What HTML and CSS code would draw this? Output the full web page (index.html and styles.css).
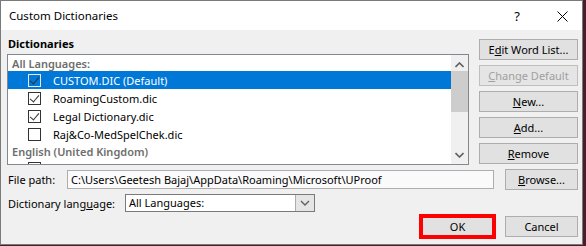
FILE: index.html
```html
<!DOCTYPE html>
<html lang="en">
  <head>
    <meta charset="UTF-8" />
    <title>Custom Dictionaries</title>
    <link rel="stylesheet" href="styles.css">
  </head>
  <body>
    <div class="window">
      <div class="titlebar">
        <span class="title">Custom Dictionaries</span>
        <span class="help">?</span>
        <span class="close">
          <svg width="11" height="11" viewBox="0 0 11 11">
            <path d="M0.5 0.5 L10.5 10.5 M10.5 0.5 L0.5 10.5" stroke="#000" stroke-width="1" fill="none" />
          </svg>
        </span>
      </div>

      <div class="content">
        <div class="top">
          <div class="left">
            <div class="group-label">Dictionaries</div>
            <div class="listbox">
              <div class="items">
                <div class="list-header">All Languages:</div>
                <div class="item selected">
                  <span class="check checked"></span>CUSTOM.DIC (Default)
                </div>
                <div class="item">
                  <span class="check checked"></span>RoamingCustom.dic
                </div>
                <div class="item">
                  <span class="check checked"></span>Legal Dictionary.dic
                </div>
                <div class="item">
                  <span class="check"></span>Raj&amp;Co-MedSpelChek.dic
                </div>
                <div class="list-header">English (United Kingdom)</div>
                <div class="item">
                  <span class="check"></span>ukEnglish-Publish.dic
                </div>
              </div>
              <div class="scrollbar">
                <svg class="arrow" width="9" height="6" viewBox="0 0 9 6">
                  <path d="M0.5 5 L4.5 1 L8.5 5" stroke="#606060" stroke-width="1.6" fill="none" />
                </svg>
                <div class="thumb-track"><div class="thumb"></div></div>
                <svg class="arrow" width="9" height="6" viewBox="0 0 9 6">
                  <path d="M0.5 1 L4.5 5 L8.5 1" stroke="#606060" stroke-width="1.6" fill="none" />
                </svg>
              </div>
            </div>
          </div>

          <div class="buttons">
            <button class="btn">E<u>d</u>it Word List...</button>
            <button class="btn" disabled><u>C</u>hange Default</button>
            <button class="btn"><u>N</u>ew...</button>
            <button class="btn"><u>A</u>dd...</button>
            <button class="btn"><u>R</u>emove</button>
          </div>
        </div>

        <div class="field-row">
          <span class="field-label path-label">File path:</span>
          <div class="path-box">C:\Users\Geetesh Bajaj\AppData\Roaming\Microsoft\UProof</div>
          <button class="btn small"><u>B</u>rowse...</button>
        </div>

        <div class="field-row lang-row">
          <span class="field-label lang-label">Dictionary lang<u>u</u>age:</span>
          <div class="combo">
            <span class="combo-value">All Languages:</span>
            <span class="combo-drop">
              <svg width="10" height="6" viewBox="0 0 10 6">
                <path d="M1 1 L5 5 L9 1" stroke="#606060" stroke-width="1.4" fill="none" />
              </svg>
            </span>
          </div>
        </div>

        <div class="actions">
          <button class="btn small ok">OK</button>
          <button class="btn small">Cancel</button>
        </div>
      </div>
    </div>
  </body>
</html>
```

FILE: styles.css
```css
body {
  margin: 0;
  background-color: #4b1d2a;
  font-family: "Noto Sans", "Open Sans", sans-serif;
  font-size: 11px;
  color: #000;
}

.window {
  box-sizing: border-box;
  width: 583px;
  height: 245px;
  border: 1px solid #7a7a7a;
  background-color: #f0f0f0;
  display: flex;
  flex-direction: column;
}

/* Title bar */
.titlebar {
  height: 29px;
  background-color: #fff;
  display: flex;
  align-items: center;
  padding-left: 8px;
  font-size: 11.5px;
}

.title {
  flex: 1;
}

.help {
  font-size: 13px;
  margin-right: 37px;
}

.close {
  display: flex;
  margin-right: 14px;
  margin-top: 2px;
}

/* Content */
.content {
  flex: 1;
  padding: 6px 4px 0 6px;
}

.top {
  display: flex;
  gap: 10px;
}

.left {
  width: 462px;
}

.group-label {
  font-weight: bold;
  line-height: 16px;
  padding-left: 1px;
  margin-bottom: 2px;
}

.listbox {
  box-sizing: border-box;
  height: 111px;
  border: 1px solid #828790;
  background-color: #fff;
  display: flex;
  overflow: hidden;
}

.items {
  flex: 1;
}

.list-header {
  height: 16px;
  line-height: 18px;
  padding-left: 4px;
  color: #6d6d6d;
  font-weight: 600;
}

.item {
  height: 18px;
  display: flex;
  align-items: center;
  padding-left: 20px;
}

.item.selected {
  background-color: #0078d7;
  color: #fff;
}

.check {
  box-sizing: border-box;
  width: 13px;
  height: 13px;
  border: 1px solid #333;
  margin-right: 12px;
  position: relative;
}

.check.checked::after {
  content: "";
  position: absolute;
  left: 3px;
  top: 0px;
  width: 4px;
  height: 8px;
  border-right: 1px solid #333;
  border-bottom: 1px solid #333;
  transform: rotate(40deg);
}

.selected .check {
  border-color: #e8e8e8;
}

/* Scrollbar */
.scrollbar {
  width: 17px;
  background-color: #f0f0f0;
  display: flex;
  flex-direction: column;
  align-items: center;
  padding: 7px 0 6px;
  box-sizing: border-box;
}

.thumb-track {
  flex: 1;
  width: 100%;
  padding-top: 3px;
}

.thumb {
  height: 41px;
  background-color: #cdcdcd;
}

/* Buttons */
.buttons {
  width: 99px;
  display: flex;
  flex-direction: column;
  gap: 5px;
  margin-top: 3px;
}

.btn {
  box-sizing: border-box;
  height: 21px;
  padding: 0;
  font-family: inherit;
  font-size: 11px;
  color: #000;
  background-color: #e1e1e1;
  border: 1px solid #adadad;
}

.btn:disabled {
  color: #a0a0a0;
  border-color: #bfbfbf;
  background-color: #e5e5e5;
}

.btn.small {
  width: 73px;
}

/* File path / language rows */
.field-row {
  display: flex;
  align-items: center;
  margin-top: 4px;
}

.field-label {
  padding-left: 1px;
}

.path-label {
  width: 59px;
}

.lang-label {
  width: 117px;
}

.path-box {
  box-sizing: border-box;
  width: 427px;
  height: 19px;
  line-height: 17px;
  border: 1px solid #adadad;
  background-color: #fafafa;
  padding-left: 3px;
  margin-right: auto;
  white-space: nowrap;
  overflow: hidden;
}

.combo {
  box-sizing: border-box;
  width: 190px;
  height: 18px;
  border: 1px solid #7a7a7a;
  background-color: #fff;
  display: flex;
}

.combo-value {
  flex: 1;
  line-height: 16px;
  padding-left: 3px;
}

.combo-drop {
  box-sizing: border-box;
  width: 19px;
  background-color: #e5e5e5;
  border-left: 1px solid #adadad;
  display: flex;
  align-items: center;
  justify-content: center;
}

.actions {
  display: flex;
  justify-content: flex-end;
  gap: 11px;
  margin-top: 4px;
}

.ok {
  outline: 4px solid #f00;
  outline-offset: -2px;
}
```
